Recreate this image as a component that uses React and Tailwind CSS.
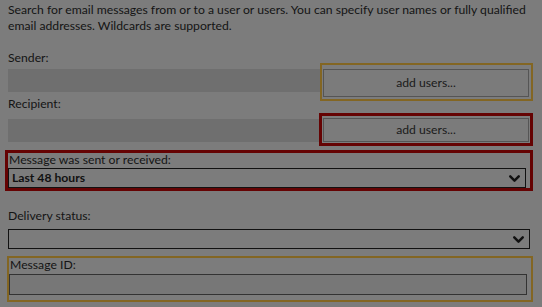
import React from 'react';
import { ChevronDown } from 'lucide-react';

const Field = ({ className = '' }) => (
  <div className={`h-[23px] bg-[#6f6f6f] ${className}`} />
);

const Select = ({ value, bold }) => (
  <div className="h-[20px] border border-[#111] flex items-center justify-between pl-[3px] pr-[2px]">
    <span className={bold ? 'font-bold text-[#111]' : ''}>{value}</span>
    <ChevronDown size={17} strokeWidth={3.5} className="text-[#111]" />
  </div>
);

const AddButton = () => (
  <div className="h-full bg-[#7b7b7b] border border-[#555] flex items-center justify-center text-[#1a1a1a]">
    add users...
  </div>
);

export default function App() {
  return (
    <div
      className="w-[542px] h-[307px] overflow-hidden bg-[#7c7c7c] text-[#141414] text-[12.2px] pl-[8px] pr-[12px] pt-[2px]"
      style={{ fontFamily: 'Lato, "Open Sans", sans-serif' }}
    >
      <p className="leading-[16px] whitespace-nowrap">
        Search for email messages from or to a user or users. You can specify user names or fully qualified
        <br />
        email addresses. Wildcards are supported.
      </p>

      {/* Sender */}
      <div className="mt-[16px] leading-[16px]">Sender:</div>
      <div className="mt-[3px] flex items-start">
        <Field className="flex-1" />
        <div className="-mt-[6px] -mb-[15px] -mr-[3px] h-[38px] w-[213px] border-2 border-[#836623] pl-[1px] pr-[2px] pt-[4px] pb-[2px]">
          <AddButton />
        </div>
      </div>

      {/* Recipient */}
      <div className="mt-[4px] leading-[16px]">Recipient:</div>
      <div className="mt-[7px] flex items-start">
        <Field className="flex-1 h-[22px]" />
        <div className="-mt-[6px] -mb-[11px] -mr-[3px] h-[33px] w-[214px] border-[3px] border-[#650303] px-[1px] pt-[2px] pb-[1px]">
          <AddButton />
        </div>
      </div>

      {/* Message was sent or received */}
      <div className="mt-[8px] -ml-[3px] -mr-[3px] border-[3px] border-[#650303] pl-0 pr-[4px] pb-0">
        <div className="leading-[14px] pl-[1px]">Message was sent or received:</div>
        <div className="mt-[1px]">
          <Select value="Last 48 hours" bold />
        </div>
      </div>

      {/* Delivery status */}
      <div className="mt-[17px] leading-[16px]">Delivery status:</div>
      <div className="mt-[5px]">
        <Select value="" />
      </div>

      {/* Message ID */}
      <div className="mt-[7px] -ml-[1px] -mr-[3px] h-[46px] border-2 border-[#836623] pl-0 pr-[4px]">
        <div className="leading-[14px] pl-[1px]">Message ID:</div>
        <div className="mt-[2px] h-[21px] border border-[#333] bg-[#777]" />
      </div>
    </div>
  );
}
